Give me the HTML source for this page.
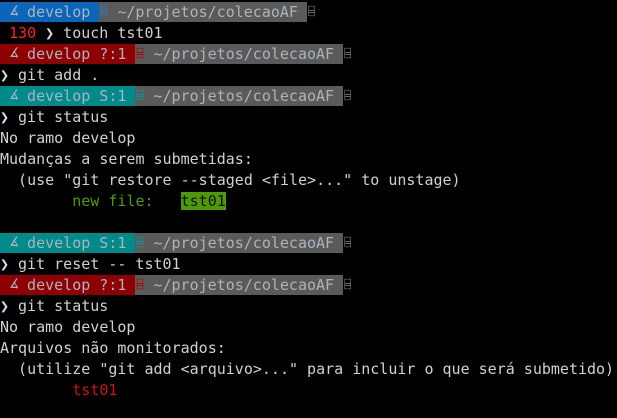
<!DOCTYPE html>
<html><head><meta charset="utf-8"><style>
html,body{margin:0;background:#000;width:617px;height:416px;overflow:hidden}
body{font-family:"DejaVu Sans Mono","Liberation Mono",monospace;font-size:15px;color:#d0d0d0;padding-top:2px}
.l{height:21px;line-height:20px;white-space:pre}
.s{display:inline-block;height:20px;line-height:20px;vertical-align:top;color:#a9b4bd}
.b{background:#0b65b8}.r{background:#8e0000}.t{background:#008a8a}.g{background:#5a5a5a}
.x{display:inline-block;width:9px;height:20px;overflow:hidden;text-align:center;font-size:11px;vertical-align:top}
.a{display:inline-block;width:9px;height:20px;overflow:hidden;text-align:center;vertical-align:top;font-size:13px}
.red{color:#ff2020}.grn{color:#4e9a06}.hl{background:#4e9a06;color:#111}.dr{color:#cc1010}
.ch{display:inline-block;width:9px;overflow:hidden;color:#cfe0ee;vertical-align:top}
</style></head><body>
<div class="l"><span class="s b"> <span class="a">∡</span> develop </span><span class="s g"><span class="x" style="color:#2a7ad0">⌸</span> ~/projetos/colecaoAF </span><span class="x" style="color:#777">⌸</span></div>
<div class="l"> <span class="red">130</span> <span class="ch">❯</span> touch tst01</div>
<div class="l"><span class="s r"> <span class="a">∡</span> develop ?:1 </span><span class="s g"><span class="x" style="color:#b00000">⌸</span> ~/projetos/colecaoAF </span><span class="x" style="color:#777">⌸</span></div>
<div class="l"><span class="ch">❯</span> git add .</div>
<div class="l"><span class="s t"> <span class="a">∡</span> develop S:1 </span><span class="s g"><span class="x" style="color:#00a0a0">⌸</span> ~/projetos/colecaoAF </span><span class="x" style="color:#777">⌸</span></div>
<div class="l"><span class="ch">❯</span> git status</div>
<div class="l">No ramo develop</div>
<div class="l">Mudanças a serem submetidas:</div>
<div class="l">  (use "git restore --staged &lt;file&gt;..." to unstage)</div>
<div class="l">        <span class="grn">new file:   </span><span class="hl">tst01</span></div>
<div class="l"> </div>
<div class="l"><span class="s t"> <span class="a">∡</span> develop S:1 </span><span class="s g"><span class="x" style="color:#00a0a0">⌸</span> ~/projetos/colecaoAF </span><span class="x" style="color:#777">⌸</span></div>
<div class="l"><span class="ch">❯</span> git reset -- tst01</div>
<div class="l"><span class="s r"> <span class="a">∡</span> develop ?:1 </span><span class="s g"><span class="x" style="color:#b00000">⌸</span> ~/projetos/colecaoAF </span><span class="x" style="color:#777">⌸</span></div>
<div class="l"><span class="ch">❯</span> git status</div>
<div class="l">No ramo develop</div>
<div class="l">Arquivos não monitorados:</div>
<div class="l">  (utilize "git add &lt;arquivo&gt;..." para incluir o que será submetido)</div>
<div class="l">        <span class="dr">tst01</span></div>
</body></html>
